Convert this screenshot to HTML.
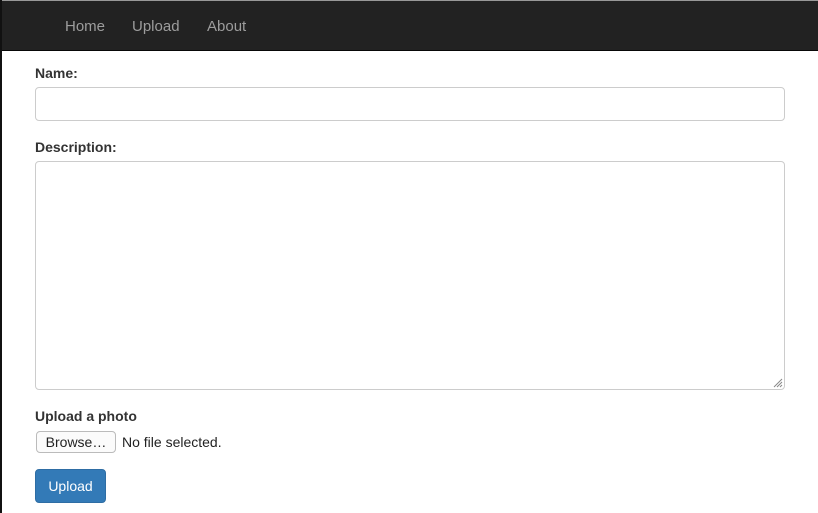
<!DOCTYPE html>
<html><head><style>
body{margin:0;width:818px;height:513px;overflow:hidden;background:#fff;font-family:"Liberation Sans",sans-serif;position:relative}
.l{position:absolute;left:0;top:0;width:2px;height:513px;background:#111}
.nav{position:absolute;left:0;top:0;width:818px;height:51px;background:#222;border-top:1px solid #999;box-sizing:border-box;border-bottom:1px solid #080808}
.nav a{position:absolute;top:17px;font-size:15px;color:#9d9d9d}
label{position:absolute;left:35px;font-size:14px;font-weight:bold;color:#333}
.box{position:absolute;left:35px;width:750px;border:1px solid #ccc;border-radius:4px;box-sizing:border-box;background:#fff}
.br{position:absolute;left:36px;top:431px;width:80px;height:22px;border:1px solid #bbb;border-radius:4px;box-sizing:border-box;font-size:14px;text-align:center;line-height:20px;color:#222;background:#fbfbfb}
.nf{position:absolute;left:122px;top:434px;font-size:14px;color:#222}
.btn{position:absolute;left:35px;top:469px;width:71px;height:34px;background:#337ab7;border:1px solid #2e6da4;border-radius:4px;box-sizing:border-box;color:#fff;font-size:14px;text-align:center;line-height:32px}
</style></head><body>
<div class="nav"><a style="left:65px">Home</a><a style="left:132px">Upload</a><a style="left:207px">About</a></div>
<div class="l"></div>
<label style="top:65px">Name:</label>
<div class="box" style="top:87px;height:34px"></div>
<label style="top:139px">Description:</label>
<div class="box" style="top:161px;height:229px"></div>
<svg style="position:absolute;left:773px;top:378px" width="10" height="10"><path d="M1 9L9 1M4 9L9 4M7 9L9 7" stroke="#888" stroke-width="1"/></svg>
<label style="top:408px">Upload a photo</label>
<div class="br">Browse…</div><div class="nf">No file selected.</div>
<div class="btn">Upload</div>
</body></html>
